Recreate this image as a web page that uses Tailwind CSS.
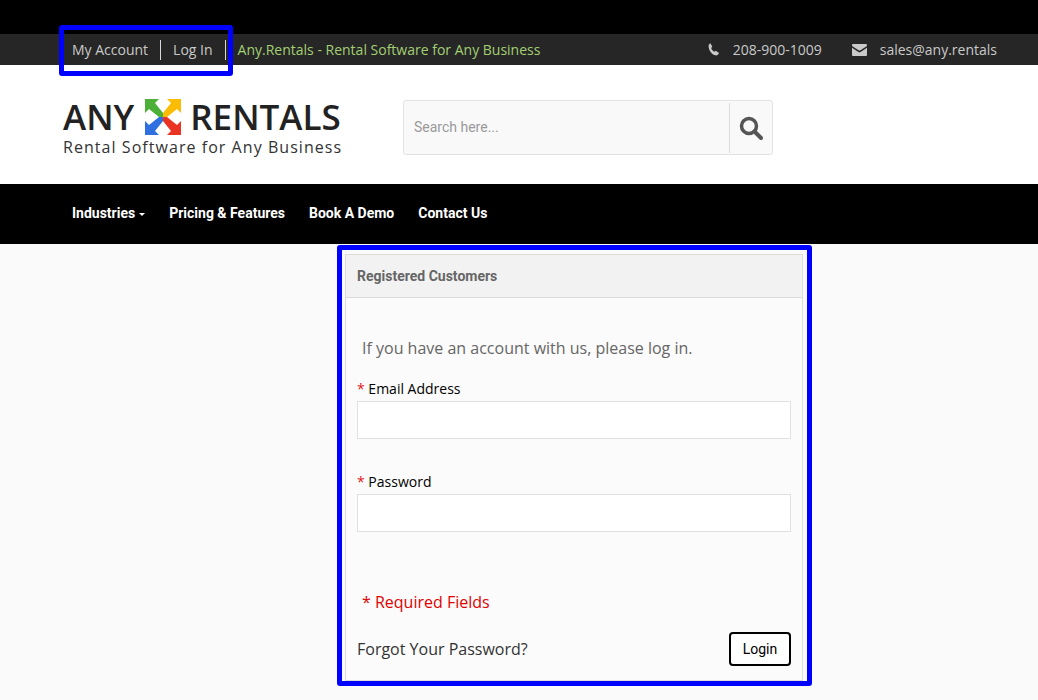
<!DOCTYPE html>
<html lang="en">
<head>
  <meta charset="UTF-8" />
  <title>Any.Rentals - Log In</title>
  <script src="https://cdn.jsdelivr.net/npm/@tailwindcss/browser@4"></script>
</head>
<body class="relative h-[700px] overflow-hidden bg-[#fafafa] font-['Open_Sans',sans-serif]">

<!-- Top bar -->
<div class="h-[34px] bg-black"></div>
<div class="flex h-[31px] items-center justify-between bg-[#262626] pl-[60px] pr-[41px] text-[14px] text-[#c9c9c9]">
  <div class="flex items-center">
    <a class="border-r border-[#d8d8d8] px-[12px] leading-[20px]">My Account</a>
    <a class="border-r border-[#d8d8d8] px-[12px] leading-[20px]">Log In</a>
    <span class="pl-[12px] text-[#a3cf73]">Any.Rentals - Rental Software for Any Business</span>
  </div>
  <div class="flex items-center">
    <svg class="h-[13px] w-[12px]" viewBox="0 0 12 13"><path fill="#c9c9c9" d="M2.6.6 4.3 3.7 3.2 5c.5 1.600 1.700 3 3.200 3.800l1.300-1 3 1.900c.3.200.3.500.1.800-.6 1-1.600 2-2.800 1.900C4 12 .8 7.600.6 3.500.5 2.300 1 1.300 2 .6c.2-.1.400-.1.600 0Z"/></svg>
    <span class="ml-[13px]">208-900-1009</span>
    <svg class="ml-[30px] h-[12px] w-[15px]" viewBox="0 0 15 12"><path fill="#c9c9c9" d="M1.200 0h12.600c.6 0 1.200.5 1.200 1.200 0 .5-.3 1-.7 1.300L8 6.600c-.3.200-.8.200-1 0L.7 2.500C.3 2.200 0 1.700 0 1.200 0 .5.600 0 1.200 0ZM0 3.800l6.400 4.100c.6.400 1.600.4 2.200 0L15 3.800v6.900c0 .7-.5 1.300-1.200 1.300H1.200C.5 12 0 11.400 0 10.700Z"/></svg>
    <span class="ml-[13px]">sales@any.rentals</span>
  </div>
</div>

<!-- Logo and search -->
<div class="flex h-[119px] bg-white pl-[63px]">
  <div class="w-[340px] pt-[32px]">
    <div class="flex h-[40px] items-center text-[35px] font-semibold leading-[40px] text-[#222]">
      <span>ANY</span>
      <svg class="ml-[11px] h-[36px] w-[36px]" viewBox="0 0 36 36">
        <path fill="#4caf37" d="M0 0h14l-4 4 8 10 0 4-4 0-10-8-4 4Z"/>
        <path fill="#fbbc05" d="M36 0H22l4 4-8 10 0 4 4 0 10-8 4 4Z"/>
        <path fill="#2f6fe0" d="M0 36h14l-4-4 8-10 0-4-4 0-10 8-4-4Z"/>
        <path fill="#ea3323" d="M36 36H22l4-4-8-10 0-4 4 0 10 8 4-4Z"/>
      </svg>
      <span class="ml-[9px]">RENTALS</span>
    </div>
    <div class="text-[16px] leading-[20px] tracking-[1.05px] text-[#333]">Rental Software for Any Business</div>
  </div>
  <div class="mt-[35px] flex h-[55px] w-[370px] items-center rounded-[3px] border border-[#e3e3e3] bg-[#f9f9f9]">
    <div class="flex-1 pl-[10px] font-['Roboto',sans-serif] text-[14px] text-[#9a9a9a]">Search here...</div>
    <div class="flex h-[50px] w-[43px] items-center justify-center border-l border-[#dcdcdc]">
      <svg class="h-[24px] w-[24px]" viewBox="0 0 24 24"><circle cx="10" cy="10" r="7.500" fill="none" stroke="#555" stroke-width="3.500"/><path d="m15.500 15.500 6.500 6.500" stroke="#555" stroke-width="4" stroke-linecap="round"/></svg>
    </div>
  </div>
</div>

<!-- Nav -->
<nav class="flex h-[60px] items-center gap-[24px] bg-black pb-[2px] pl-[72px] font-['Roboto',sans-serif] text-[14px] font-bold text-white">
  <a class="flex items-center">Industries<span class="ml-[4px] mt-[2px] border-x-[3px] border-t-[3px] border-x-transparent border-t-white"></span></a>
  <a>Pricing &amp; Features</a>
  <a>Book A Demo</a>
  <a>Contact Us</a>
</nav>

<!-- Login card -->
<div class="ml-[345px] mt-[10px] h-[427px] w-[458px] border border-[#dcdcdc] bg-[#fbfbfb]">
  <div class="flex h-[43px] items-center border-b border-[#dcdcdc] bg-[#f2f2f2] pl-[11px] font-['Roboto',sans-serif] text-[14px] font-bold text-[#666]">Registered Customers</div>
  <div class="px-[11px]">
    <p class="mt-[38px] pl-[5px] text-[16px] leading-[24px] text-[#666]">If you have an account with us, please log in.</p>
    <label class="mt-[19px] block text-[14px] leading-[20px] text-black"><span class="text-[#e02020]">*</span> Email Address</label>
    <input class="mt-[2px] block h-[38px] w-[434px] border border-[#e0e0e0] bg-white" />
    <label class="mt-[33px] block text-[14px] leading-[20px] text-black"><span class="text-[#e02020]">*</span> Password</label>
    <input class="mt-[2px] block h-[38px] w-[434px] border border-[#e0e0e0] bg-white" />
    <p class="mt-[58px] pl-[5px] text-[16px] leading-[24px] text-[#e00000]">* Required Fields</p>
    <div class="mt-[18px] flex w-[434px] items-center justify-between">
      <a class="text-[16px] text-[#333]">Forgot Your Password?</a>
      <button class="h-[34px] w-[62px] rounded-[4px] border-2 border-black bg-white font-['Roboto',sans-serif] text-[14px] text-black">Login</button>
    </div>
  </div>
</div>

<!-- Highlight boxes -->
<div class="absolute left-[59px] top-[25px] h-[51px] w-[174px] rounded-[3px] border-[5px] border-[#0000ff]"></div>
<div class="absolute left-[337px] top-[245px] h-[441px] w-[475px] rounded-[3px] border-[5px] border-[#0000ff]"></div>

</body>
</html>
